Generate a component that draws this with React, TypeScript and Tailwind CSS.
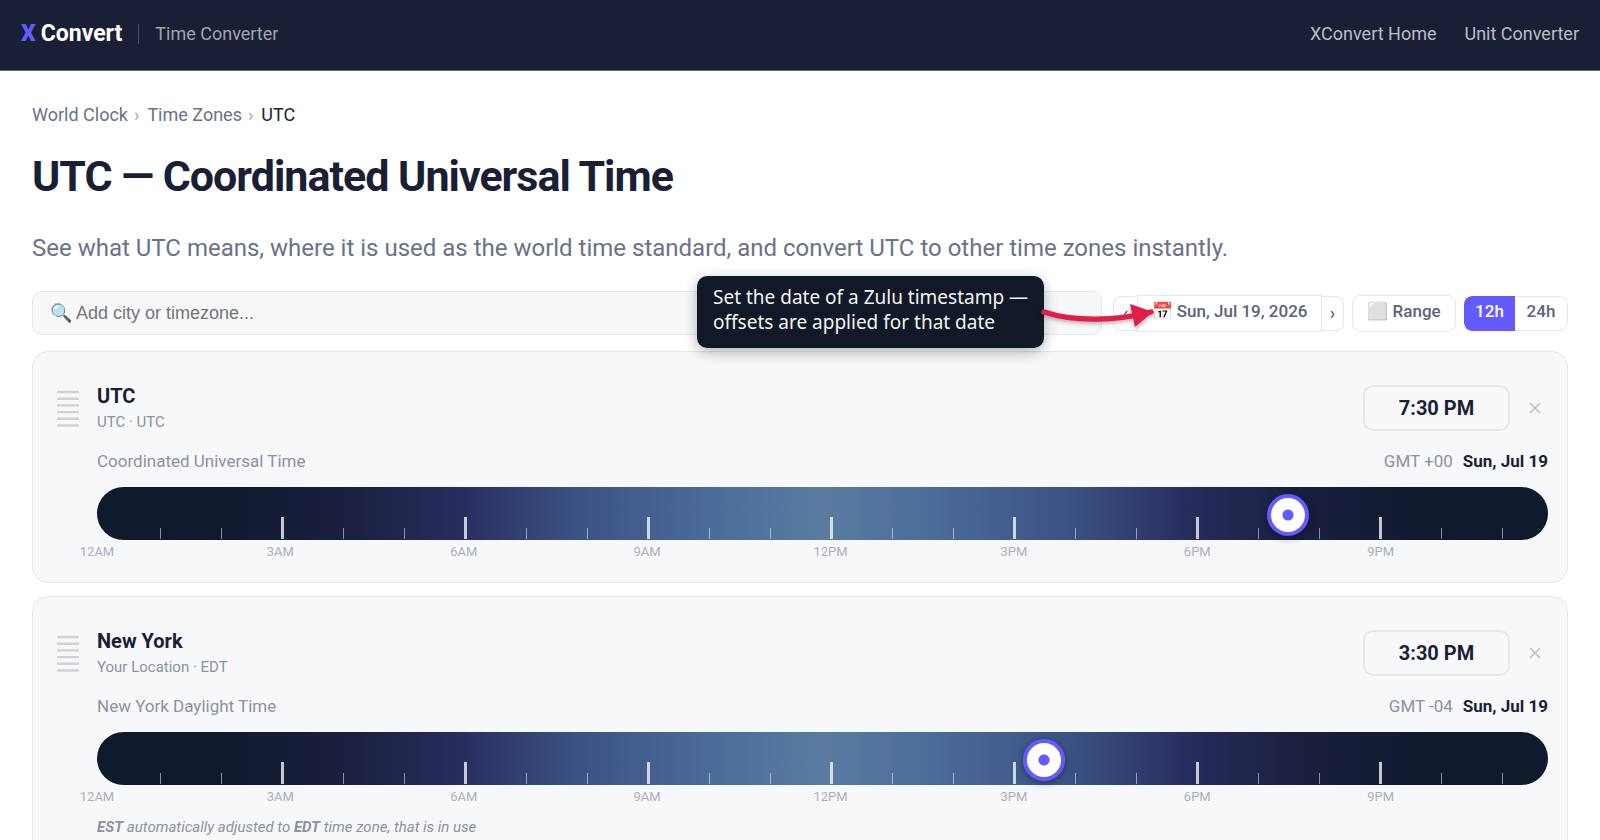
import { useState } from "react";

type Zone = {
  id: string;
  city: string;
  place: string;
  longName: string;
  offset: string;
  date: string;
  minutes: number;
  note?: { from: string; to: string };
};

const zones: Zone[] = [
  {
    id: "utc",
    city: "UTC",
    place: "UTC · UTC",
    longName: "Coordinated Universal Time",
    offset: "GMT +00",
    date: "Sun, Jul 19",
    minutes: 1170,
  },
  {
    id: "new-york",
    city: "New York",
    place: "Your Location · EDT",
    longName: "New York Daylight Time",
    offset: "GMT -04",
    date: "Sun, Jul 19",
    minutes: 930,
    note: { from: "EST", to: "EDT" },
  },
];

const hourLabels = ["12AM", "3AM", "6AM", "9AM", "12PM", "3PM", "6PM", "9PM"];
const hours = Array.from({ length: 23 }, (_, i) => i + 1);

function formatTime(minutes: number, is24h: boolean) {
  const h = Math.floor(minutes / 60);
  const m = String(minutes % 60).padStart(2, "0");
  if (is24h) return `${String(h).padStart(2, "0")}:${m}`;
  return `${h % 12 || 12}:${m} ${h < 12 ? "AM" : "PM"}`;
}

function Header() {
  return (
    <header className="flex h-[71px] items-center justify-between border-b border-[#63647a] bg-[#1a1f36] px-[21px] pb-[2px] text-lg">
      <div className="flex items-center">
        <a href="#" className="flex gap-[5px] text-[23px] leading-7 font-bold text-white">
          <span className="font-black text-[#635bff]">X</span>
          <span>Convert</span>
        </a>
        <span className="mx-4 h-5 w-px bg-[#474b5e]" />
        <a href="#" className="text-[#a0a3af]">
          Time Converter
        </a>
      </div>
      <nav className="flex gap-7 text-[#babcc5]">
        <a href="#">XConvert Home</a>
        <a href="#">Unit Converter</a>
      </nav>
    </header>
  );
}

function Callout() {
  return (
    <>
      <div
        role="tooltip"
        className="absolute right-[calc(100%+69px)] -top-[19px] z-10 w-[347px] rounded-[10px] bg-[#111827] pt-[9px] pr-2 pb-[13px] pl-4 font-['Noto_Sans',sans-serif] text-[19px] leading-[25px] font-normal text-[#f3f4f6] shadow-[0_4px_14px_rgba(0,0,0,0.3)]"
      >
        Set the date of a Zulu timestamp — offsets are applied for that date
      </div>
      <svg
        className="pointer-events-none absolute -top-[7px] -left-[75px] z-10 drop-shadow-[0_2px_2px_rgba(0,0,0,0.3)]"
        width="120"
        height="44"
        viewBox="0 0 120 44"
        fill="none"
      >
        <path d="M6 24C36 34 78 33 113 24" stroke="#e11d48" strokeWidth="5.4" strokeLinecap="round" />
        <path d="M115 24L92 16L97 39Z" fill="#e11d48" />
      </svg>
    </>
  );
}

type ToolbarProps = {
  is24h: boolean;
  onChange: (v: boolean) => void;
};

function Toolbar({ is24h, onChange }: ToolbarProps) {
  const side = "h-[35px] border border-[#e3e8ee] bg-white text-lg leading-none";

  return (
    <div className="flex items-center">
      <input
        type="text"
        aria-label="Add city or timezone"
        placeholder="🔍 Add city or timezone..."
        className="h-11 min-w-0 flex-1 rounded-[10px] border border-[#e3e8ee] bg-[#f7f8fa] px-[17px] font-['Liberation_Sans',sans-serif] text-lg outline-none placeholder:text-[#757575]"
      />
      <div className="relative ml-[11px] flex items-center font-medium text-[#5b6479]">
        <button type="button" aria-label="Previous day" className={`${side} w-6 rounded-l-lg border-r-0`}>
          ‹
        </button>
        <button type="button" className="h-[37px] w-[185px] border border-[#e3e8ee] bg-white pb-[2px] text-[17px]">
          📅 Sun, Jul 19, 2026
        </button>
        <button type="button" aria-label="Next day" className={`${side} w-[22px] rounded-r-lg border-l-0`}>
          ›
        </button>
        <Callout />
      </div>
      <button
        type="button"
        className="ml-2 h-[37px] w-[104px] rounded-lg border border-[#e3e8ee] bg-white pb-[2px] text-[17px] font-medium text-[#5b6479]"
      >
        ⬜ Range
      </button>
      <div className="ml-2 flex h-[35px] overflow-hidden rounded-lg text-[17px] font-medium">
        <button
          type="button"
          aria-pressed={!is24h}
          onClick={() => onChange(false)}
          className={`w-[51px] rounded-l-lg pb-[2px] ${is24h ? "border border-[#e3e8ee] bg-white text-[#5b6479]" : "bg-[#635bff] text-white"}`}
        >
          12h
        </button>
        <button
          type="button"
          aria-pressed={is24h}
          onClick={() => onChange(true)}
          className={`w-[53px] rounded-r-lg pb-[2px] ${is24h ? "bg-[#635bff] text-white" : "border border-l-0 border-[#e3e8ee] bg-white text-[#5b6479]"}`}
        >
          24h
        </button>
      </div>
    </div>
  );
}

function DayTrack({ zone, minutes, onChange }: { zone: Zone; minutes: number; onChange: (v: number) => void }) {
  return (
    <>
      <div className="mt-[14px] grid h-[53px] rounded-full bg-[linear-gradient(90deg,#0f1a2c_0%,#0f1a2c_8%,#1a1f3f_17%,#272d5e_25%,#3b5284_33%,#4a6a99_42%,#5b7ca0_50%,#4a6a99_58%,#3b5284_67%,#272d5e_75%,#1a1f3f_83%,#0f1a2c_92%,#0f1a2c_100%)]">
        <div className="col-start-1 row-start-1 flex items-end pr-[15px] pb-px pl-[33px]">
          {hours.map((h) => (
            <span key={h} className="flex flex-1 justify-center">
              {h % 3 === 0 ? (
                <span className="h-[22px] w-[3px] bg-white/75" />
              ) : (
                <span className="h-[11px] w-px bg-white/50" />
              )}
            </span>
          ))}
        </div>
        <input
          type="range"
          aria-label={`Time in ${zone.city}`}
          min={20}
          max={1405}
          step={5}
          value={minutes}
          onChange={(e) => onChange(Number(e.target.value))}
          className="z-0 col-start-1 row-start-1 w-full cursor-pointer appearance-none bg-transparent pt-[2px] [&::-webkit-slider-thumb]:size-[42px] [&::-webkit-slider-thumb]:appearance-none [&::-webkit-slider-thumb]:rounded-full [&::-webkit-slider-thumb]:border-4 [&::-webkit-slider-thumb]:border-[#635bff] [&::-webkit-slider-thumb]:bg-[radial-gradient(circle,#635bff_5px,#fff_6px)] [&::-webkit-slider-thumb]:shadow-[0_2px_8px_rgba(0,0,0,0.35)]"
        />
      </div>
      <div className="mt-[2px] -mr-4 flex text-[13px] leading-5 text-[#a9b0bd]">
        {hourLabels.map((label) => (
          <div key={label} className="flex-1">
            <span className="flex w-0 justify-center">{label}</span>
          </div>
        ))}
      </div>
    </>
  );
}

function ZoneCard({ zone, is24h }: { zone: Zone; is24h: boolean }) {
  const [minutes, setMinutes] = useState(zone.minutes);

  return (
    <section className="flex gap-[18px] rounded-2xl border border-[#e3e8ee] bg-[#f7f8fa] pt-[29px] pr-[19px] pb-5 pl-6">
      <button type="button" aria-label={`Reorder ${zone.city}`} className="mt-2 self-start">
        <svg width="22" height="40" viewBox="0 0 22 40" stroke="#d0d2d8" strokeWidth="2.4">
          <path d="M0 3H22M0 9.7H22M0 16.4H22M0 23.1H22M0 29.8H22M0 36.5H22" />
        </svg>
      </button>
      <div className="min-w-0 flex-1">
        <div className="flex items-center justify-between">
          <div className="pt-px">
            <h2 className="text-xl leading-7 font-bold text-[#1a1f36]">{zone.city}</h2>
            <p className="text-[15px] leading-6 text-[#8a92a3]">{zone.place}</p>
          </div>
          <div className="flex items-center">
            <button
              type="button"
              className="h-[46px] w-[147px] rounded-[10px] border-2 border-[#e3e8ee] text-xl font-bold text-[#1a1f36]"
            >
              {formatTime(minutes, is24h)}
            </button>
            <button type="button" aria-label={`Remove ${zone.city}`} className="ml-3 flex size-[26px] items-center justify-center">
              <svg width="12" height="12" viewBox="0 0 12 12" stroke="#b9bdc6" strokeWidth="1.5">
                <path d="M1 1L11 11M11 1L1 11" />
              </svg>
            </button>
          </div>
        </div>
        <div className="mt-[15px] flex justify-between text-[17px] leading-6 text-[#8a92a3]">
          <span>{zone.longName}</span>
          <span className="flex gap-[10px]">
            {zone.offset}
            <strong className="font-bold text-[#1a1f36]">{zone.date}</strong>
          </span>
        </div>
        <DayTrack zone={zone} minutes={minutes} onChange={setMinutes} />
        {zone.note && (
          <p className="mt-2 text-[15px] leading-6 text-[#8a92a3] italic">
            <strong>{zone.note.from}</strong> automatically adjusted to <strong>{zone.note.to}</strong> time zone, that
            is in use
          </p>
        )}
      </div>
    </section>
  );
}

export default function App() {
  const [is24h, setIs24h] = useState(false);

  return (
    <div className="h-screen overflow-hidden bg-white font-[Roboto,sans-serif] text-[#1a1f36]">
      <Header />
      <main className="px-8 pt-8">
        <nav aria-label="Breadcrumb" className="flex text-lg leading-6 text-[#697386]">
          <a href="#">World Clock</a>
          <span className="mr-2 ml-[6px] text-[#a3acb9]">›</span>
          <a href="#">Time Zones</a>
          <span className="mr-2 ml-[6px] text-[#a3acb9]">›</span>
          <span className="text-[#1a1f36]">UTC</span>
        </nav>
        <h1 className="mt-6 text-[43px] leading-[50px] font-bold tracking-[-1px]">UTC — Coordinated Universal Time</h1>
        <p className="mt-[31px] text-2xl leading-8 text-[#697386]">
          See what UTC means, where it is used as the world time standard, and convert UTC to other time zones instantly.
        </p>
        <div className="mt-[27px]">
          <Toolbar is24h={is24h} onChange={setIs24h} />
        </div>
        <div className="mt-4 flex flex-col gap-[13px]">
          {zones.map((zone) => (
            <ZoneCard key={zone.id} zone={zone} is24h={is24h} />
          ))}
        </div>
      </main>
    </div>
  );
}
